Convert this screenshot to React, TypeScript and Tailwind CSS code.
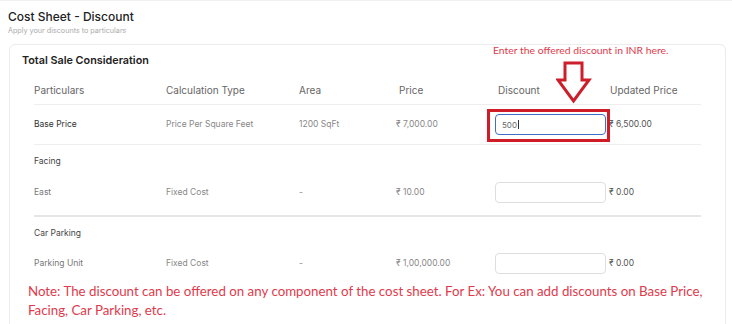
import React from "react";

const cols = "grid grid-cols-[132px_133px_97px_99px_115px_1fr] items-center";

function Row({ a, b, c, d, u, value, active, strong, h, border }: { a: string; b?: string; c?: string; d?: string; u?: string; value?: string; active?: boolean; strong?: boolean; h: string; border?: string }) {
  return (
    <div className={`${cols} ${h} ${border ?? ""}`}>
      <div className={`text-[8.5px] ${strong ? "text-[#333]" : "text-[#777]"}`}>{a}</div>
      <div className="text-[8.5px] text-[#888]">{b}</div>
      <div className="text-[8.5px] text-[#888]">{c}</div>
      <div className="text-[8.5px] text-[#888]">{d}</div>
      <div>
        {u !== undefined && (
          <div
            className={`h-[21px] w-[111px] rounded-[4px] border bg-white flex items-center pl-[6px] text-[8px] text-[#666] ${
              active ? "border-[#3f6fc9] border-[1.5px]" : "border-[#dedede]"
            }`}
          >
            {value}
            {active && <span className="ml-[1px] inline-block h-[9px] w-[1px] bg-[#333]" />}
          </div>
        )}
      </div>
      <div className="text-[8.5px] text-[#555] -ml-[1px]">{u}</div>
    </div>
  );
}

export default function App() {
  return (
    <div className="relative w-[732px] h-[324px] overflow-hidden bg-white border-t border-[#f0f0f0]" style={{ fontFamily: "Inter, 'Noto Sans', sans-serif" }}>
      <div className="pl-2 pt-[6px]">
        <div className="text-[12px] leading-[19px] font-medium text-[#222]">Cost Sheet - Discount</div>
        <div className="text-[7.2px] leading-[10px] text-[#aaa]">Apply your discounts to particulars</div>
      </div>
      <div className="ml-[9px] mr-[6px] mt-[8px] rounded-md border border-[#ececec] px-3 pt-[7px] pb-8">
        <div className="text-[10.8px] leading-[18px] font-semibold text-[#222]">Total Sale Consideration</div>
        <div className="px-3">
          <div className={`${cols} mt-[7px] h-[28px] border-b border-[#eeeeee] text-[10px] text-[#666]`}>
            <div>Particulars</div>
            <div>Calculation Type</div>
            <div>Area</div>
            <div className="pl-[3px]">Price</div>
            <div className="pl-[3px]">Discount</div>
            <div>Updated Price</div>
          </div>
          <Row a="Base Price" b="Price Per Square Feet" c="1200 SqFt" d="₹ 7,000.00" u="₹ 6,500.00" value="500" active strong h="h-[40px]" border="border-b border-[#eeeeee]" />
          <div className="h-[32px] flex items-center text-[8.5px] text-[#444]">Facing</div>
          <Row a="East" b="Fixed Cost" c="-" d="₹ 10.00" u="₹ 0.00" h="h-[30px]" />
          <div className="h-[10px] border-b-2 border-[#e6e6e6]" />
          <div className="h-[32px] flex items-center text-[8.5px] text-[#444]">Car Parking</div>
          <Row a="Parking Unit" b="Fixed Cost" c="-" d="₹ 1,00,000.00" u="₹ 0.00" h="h-[28px]" />
        </div>
        <div className="ml-[6px] mt-[5px] whitespace-nowrap text-[13.3px] leading-[19px] text-[#df3a4c]" style={{ fontFamily: "Lato, 'Open Sans', sans-serif" }}>
          Note: The discount can be offered on any component of the cost sheet. For Ex: You can add discounts on Base Price,
          <br />
          Facing, Car Parking, etc.
        </div>
      </div>

      <div className="absolute left-[493px] top-[43px] text-[10.4px] leading-[13px] text-[#df3a4c]" style={{ fontFamily: "Lato, 'Open Sans', sans-serif" }}>
        Enter the offered discount in INR here.
      </div>
      <svg className="absolute left-[556px] top-[60px]" width="36" height="43" viewBox="0 0 36 43">
        <polygon points="9,2 26,2 26,19 33,19 17.5,40 2,19 9,19" fill="none" stroke="#cc1f2b" strokeWidth="3" strokeLinejoin="miter" />
      </svg>
      <div className="absolute left-[487px] top-[108px] w-[123px] h-[33px] border-[3px] border-[#cf1c26]" />
    </div>
  );
}
